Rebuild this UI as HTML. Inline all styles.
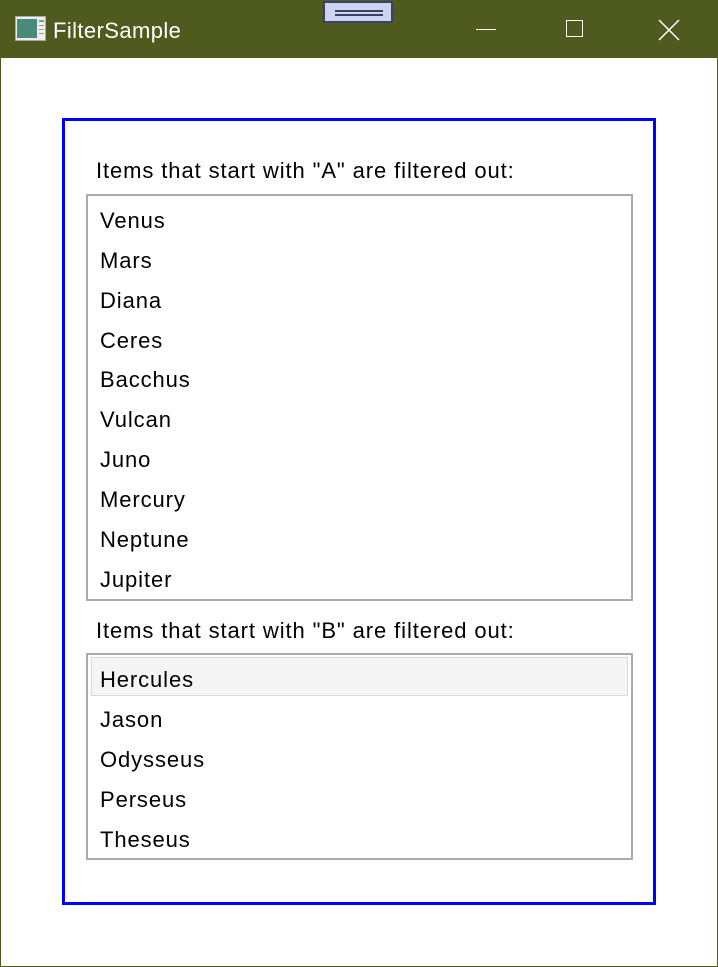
<!DOCTYPE html>
<html><head><style>
body{margin:0;width:718px;height:967px;overflow:hidden;background:#fff;font-family:"Liberation Sans",sans-serif;position:relative}
.win{position:absolute;left:0;top:0;width:716px;height:965px;border:1px solid #4f5a1e}
.tb{position:absolute;left:0;top:0;width:718px;height:58px;background:#4f5a1e}
.t{position:absolute;left:53px;top:18px;color:#fff;font-size:22px;letter-spacing:0.4px}
.a{position:absolute;font-size:22px;letter-spacing:0.9px;color:#000}
.blue{position:absolute;left:62px;top:118px;width:588px;height:781px;border:3px solid #0000ff}
.lb{position:absolute;left:86px;width:543px;border:2px solid #ababab;border-width:2px}
.it{position:absolute;left:100px;font-size:22px;letter-spacing:0.9px;color:#000}
</style></head><body>
<div class="win"></div>
<div class="tb">
<svg style="position:absolute;left:15px;top:16px" width="31" height="26"><rect x="0.5" y="0.5" width="30" height="24" fill="#eee" stroke="#aaa"/><rect x="2" y="3" width="20" height="19" fill="#4a8a7a"/><rect x="24" y="4" width="5" height="2" fill="#6a8"/><rect x="24" y="9" width="5" height="1" fill="#999"/><rect x="24" y="13" width="5" height="1" fill="#999"/><rect x="24" y="17" width="5" height="1" fill="#999"/></svg>
<div class="t">FilterSample</div>
<div style="position:absolute;left:323px;top:1px;width:70px;height:22px;background:#ccd4ee;border:2px solid #39416b;box-sizing:border-box"><div style="position:absolute;left:10px;top:7px;width:48px;height:2px;background:#39416b"></div><div style="position:absolute;left:10px;top:11px;width:48px;height:2px;background:#39416b"></div></div>
<div style="position:absolute;left:476px;top:29px;width:20px;height:1px;background:#fff"></div>
<div style="position:absolute;left:566px;top:20px;width:17px;height:17px;border:1.5px solid #fff;box-sizing:border-box"></div>
<svg style="position:absolute;left:658px;top:19px" width="22" height="22"><path d="M1 1L21 21M21 1L1 21" stroke="#fff" stroke-width="1.5"/></svg>
</div>
<div class="blue"></div>
<div class="a" style="left:96px;top:158px">Items that start with "A" are filtered out:</div>
<div class="lb" style="top:194px;height:403px"></div>
<div class="it" style="top:208px">Venus</div>
<div class="it" style="top:248px">Mars</div>
<div class="it" style="top:288px">Diana</div>
<div class="it" style="top:328px">Ceres</div>
<div class="it" style="top:367px">Bacchus</div>
<div class="it" style="top:407px">Vulcan</div>
<div class="it" style="top:447px">Juno</div>
<div class="it" style="top:487px">Mercury</div>
<div class="it" style="top:527px">Neptune</div>
<div class="it" style="top:567px">Jupiter</div>
<div class="a" style="left:96px;top:618px">Items that start with "B" are filtered out:</div>
<div class="lb" style="top:653px;height:203px"></div>
<div style="position:absolute;left:91px;top:657px;width:535px;height:37px;background:#f5f5f5;border:1px solid #dadada"></div>
<div class="it" style="top:667px">Hercules</div>
<div class="it" style="top:707px">Jason</div>
<div class="it" style="top:747px">Odysseus</div>
<div class="it" style="top:787px">Perseus</div>
<div class="it" style="top:827px">Theseus</div>
</body></html>
